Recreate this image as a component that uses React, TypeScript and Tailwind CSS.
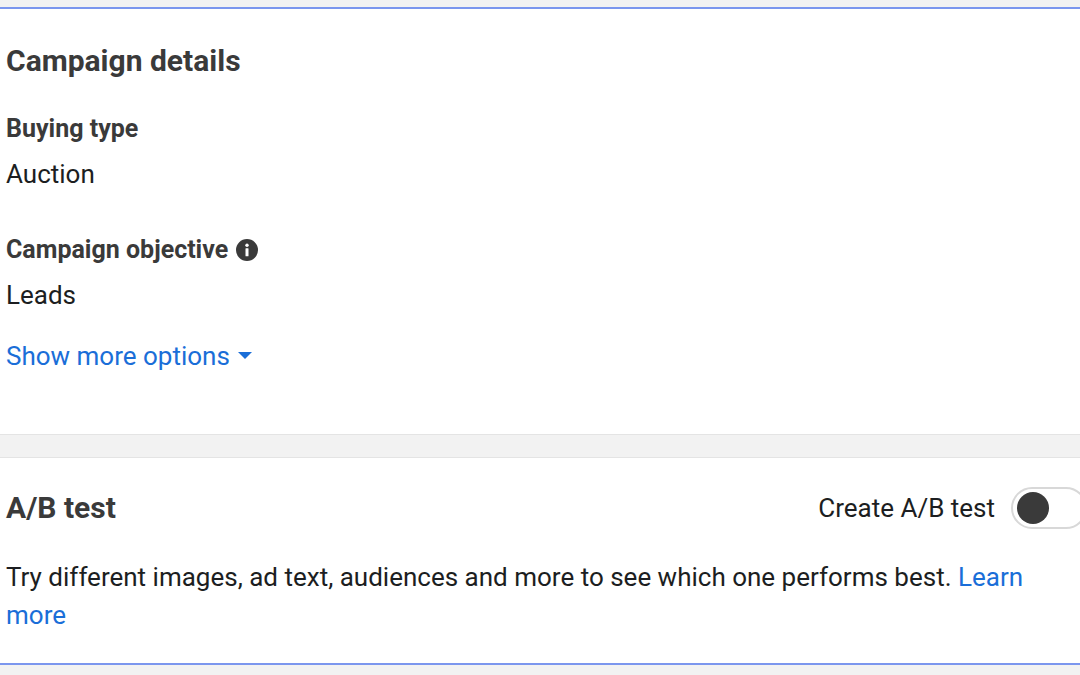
export default function App() {
  return (
    <div className="w-[1080px] h-[675px] overflow-hidden bg-[#f2f2f2] text-[#1c1e21]" style={{ fontFamily: "Roboto, 'Liberation Sans', sans-serif" }}>
      <div className="h-[7px]" />
      <div className="h-[2px] bg-[#7b96ee]" />
      <div className="bg-white h-[426px] pl-[6px] pt-[34px] border-b border-[#e4e4e4]">
        <div className="text-[30px] font-bold leading-[36px] text-[#3a3a3a]">Campaign details</div>
        <div className="mt-[34px] text-[25px] font-bold leading-[32px] text-[#3a3a3a]">Buying type</div>
        <div className="mt-[13px] text-[26px] leading-[32px]">Auction</div>
        <div className="mt-[44px] flex items-center gap-[8px] text-[25px] font-bold leading-[32px] text-[#3a3a3a]">
          Campaign objective
          <svg width="22" height="22" viewBox="0 0 22 22"><circle cx="11" cy="11" r="11" fill="#3a3a3a" /><circle cx="11" cy="6.3" r="1.7" fill="#fff" /><rect x="9.5" y="9.2" width="3" height="8" rx="0.5" fill="#fff" /></svg>
        </div>
        <div className="mt-[13px] text-[26px] leading-[32px]">Leads</div>
        <div className="mt-[29px] flex items-center gap-[8px] text-[26px] leading-[32px] text-[#1a6ed8]">
          Show more options
          <svg width="14" height="8" viewBox="0 0 14 8"><path d="M0 0h14L7 7z" fill="#1a6ed8" /></svg>
        </div>
      </div>
      <div className="h-[22px]" />
      <div className="bg-white h-[206px] border-t border-[#e4e4e4] pl-[6px]">
        <div className="flex items-center justify-between pt-[29px]">
          <div className="text-[30px] font-bold leading-[40px] text-[#3a3a3a]">A/B test</div>
          <div className="flex items-center gap-[16px]">
            <span className="text-[26px] leading-[32px]">Create A/B test</span>
            <div className="w-[76px] h-[42px] rounded-full border-2 border-[#d8d8d8] mr-[-7px] flex items-center pl-[4px]">
              <div className="w-[32px] h-[32px] rounded-full bg-[#3a3a3a]" />
            </div>
          </div>
        </div>
        <div className="mt-[29px] text-[26px] leading-[38px] pr-[30px]">
          Try different images, ad text, audiences and more to see which one performs best. <span className="text-[#1a6ed8]">Learn more</span>
        </div>
      </div>
      <div className="h-[2px] bg-[#7b96ee]" />
    </div>
  );
}
